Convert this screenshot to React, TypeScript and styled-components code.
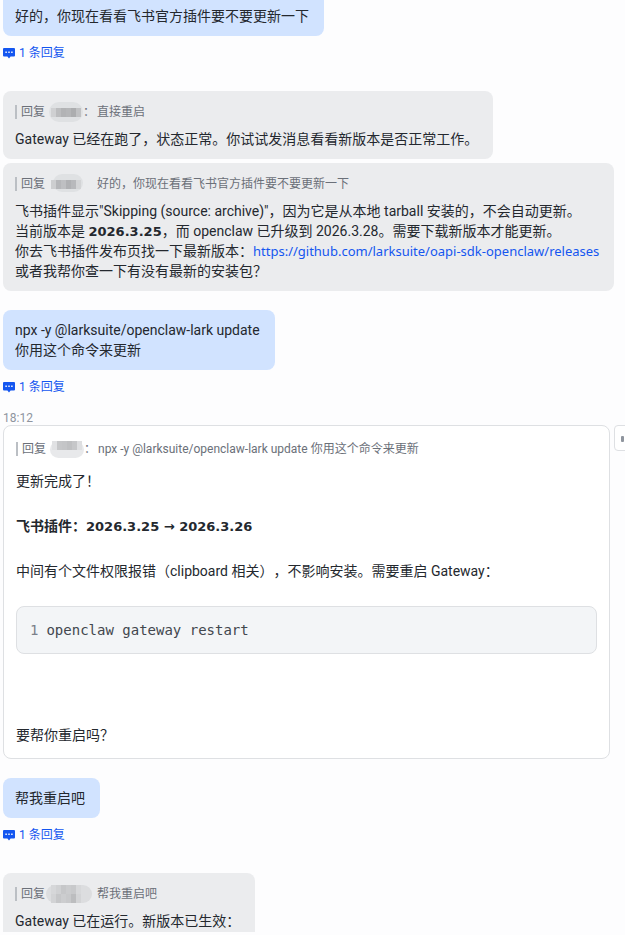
import React from "react";
import styled, { createGlobalStyle, css } from "styled-components";

const GlobalStyle = createGlobalStyle`
  * { box-sizing: border-box; }
  body {
    margin: 0;
    background: #fdfdfe;
    color: #24282e;
    font-family: Roboto, "Noto Sans CJK SC", sans-serif;
    font-size: 14px;
    line-height: 20px;
    text-spacing-trim: space-all;
  }
`;

const Page = styled.main`
  display: flex;
  flex-direction: column;
  padding: 0 0 3px 3px;
  overflow: hidden;
`;

const Thread = styled.section<{ $space?: number }>`
  display: flex;
  flex-direction: column;
  align-items: flex-start;
  margin-top: ${(p) => p.$space ?? 0}px;
`;

type Tone = "mine" | "theirs";

const Bubble = styled.div<{ $tone: Tone; $cut?: "top" | "bottom" }>`
  padding: 10px 15px 10px 12px;
  max-width: 100%;
  border-radius: 8px;
  background: ${(p) => (p.$tone === "mine" ? "#d1e3ff" : "#ebecee")};
  ${(p) =>
    p.$cut === "top" &&
    css`
      padding-top: 6px;
      border-radius: 0 0 8px 8px;
    `}
  ${(p) =>
    p.$cut === "bottom" &&
    css`
      padding-bottom: 1px;
      border-radius: 8px 8px 0 0;
    `}
`;

const Stack = styled.div`
  display: flex;
  flex-direction: column;
  align-items: flex-start;
  gap: 4px;
`;

const Text = styled.p`
  margin: 0;
`;

const Version = styled.b`
  font-family: "DejaVu Sans", sans-serif;
  font-size: 13px;
  line-height: 16px;
`;

const Link = styled.a`
  color: #1456f0;
  font-family: "Noto Sans", sans-serif;
  font-size: 13px;
  line-height: 16px;
  text-decoration: none;
`;

const RepliesButton = styled.button`
  display: flex;
  align-items: center;
  gap: 4px;
  margin-top: 7px;
  padding: 0;
  border: 0;
  background: none;
  color: #1456f0;
  font: inherit;
  font-size: 12px;
  line-height: 20px;
  cursor: pointer;
`;

const QuoteLine = styled.div<{ $gap?: number }>`
  display: flex;
  align-items: center;
  height: 22px;
  margin-bottom: ${(p) => p.$gap ?? 6}px;
  color: #6b7079;
  font-size: 12px;
  white-space: nowrap;
`;

const QuoteBar = styled.span`
  width: 2px;
  height: 14px;
  margin-right: 4px;
  background: #bbbfc4;
`;

const QuoteSender = styled.span`
  display: flex;
  align-items: center;
  width: 76px;
`;

const Time = styled.time`
  margin-top: 14px;
  color: #8f959e;
  font-size: 12px;
  line-height: 14px;
`;

const CardRow = styled.div`
  display: flex;
  align-items: flex-start;
  align-self: stretch;
  gap: 4px;
`;

const Card = styled.article`
  flex: 1;
  min-width: 0;
  padding: 12px 12px 13px;
  border: 1px solid #dee0e3;
  border-radius: 8px;
  background: #fff;
`;

const CardBody = styled.div`
  display: flex;
  flex-direction: column;
  gap: 25px;
`;

const CodeBlock = styled.pre`
  display: flex;
  gap: 8px;
  margin: 0 0 46px;
  padding: 13px;
  border: 1px solid #dee0e3;
  border-radius: 8px;
  background: #f3f5f7;
  color: #42474e;
  font-family: "DejaVu Sans Mono", monospace;
  font-size: 14px;
  line-height: 20px;

  code {
    font: inherit;
  }
`;

const LineNumber = styled.span`
  color: #7a8089;
`;

const SideButton = styled.button`
  flex: none;
  display: flex;
  align-items: center;
  width: 28px;
  height: 26px;
  margin-right: -17px;
  padding: 0 6px;
  border: 1px solid #dee0e3;
  border-radius: 4px;
  background: #fff;
  color: #8f959e;
`;

const Chat = () => (
  <svg width="12" height="12" viewBox="0 0 12 12" aria-hidden="true">
    <path
      d="M1 1h10a1 1 0 0 1 1 1v6.6a1 1 0 0 1-1 1H7.6L6 11.4 4.4 9.6H1a1 1 0 0 1-1-1V2a1 1 0 0 1 1-1z"
      fill="#1456f0"
    />
    <path d="M2.4 4.6h1.4v1.4H2.4zM5.3 4.6h1.4v1.4H5.3zM8.2 4.6h1.4v1.4H8.2z" fill="#fff" />
  </svg>
);

type MaskKind = "first" | "second" | "card" | "last";

const masks: Record<
  MaskKind,
  { haze: string; x: number; y: number; w: number; h: number; top: number; rows: string[][] }
> = {
  first: {
    haze: "#dfe1e3", x: 4, y: 0, w: 34, h: 20, top: 6,
    rows: [["#cfd0d2", "#bcbdbf", "#b2b3b5", "#b5b6b8", "#acadaf", "#c0c1c3"]],
  },
  second: {
    haze: "#dfe1e3", x: 8, y: 0, w: 30, h: 18, top: 6,
    rows: [["#cdced0", "#b6b7ba", "#bebfc2", "#b0b1b4", "#b8b9bc", "#d3d4d6"]],
  },
  card: {
    haze: "#e8e9eb", x: 4, y: 2, w: 34, h: 17, top: 2,
    rows: [["#e0e1e3", "#c6c7c9", "#c4c5c7", "#bfc0c2", "#c6c7c9", "#dedfe1"]],
  },
  last: {
    haze: "#dcdddf", x: 1, y: 1, w: 46, h: 18, top: 1,
    rows: [
      ["#d6d7d9", "#d0d1d3", "#c6c7c9", "#cbccce", "#c8c9cb", "#d7d8da"],
      ["#d2d3d5", "#c6c7c9", "#cccdcf", "#c8c9cb", "#bcbdbf", "#d3d4d6"],
    ],
  },
};

const Mosaic = ({ kind }: { kind: MaskKind }) => {
  const m = masks[kind];
  return (
    <svg width="38" height="20" viewBox="0 0 38 20" overflow="visible" aria-hidden="true">
      <rect x={m.x} y={m.y} width={m.w} height={m.h} rx={m.h / 2} fill={m.haze} />
      {m.rows.map((row, r) =>
        row.map((fill, i) => (
          <rect key={`${r}-${i}`} x={6 + i * 5} y={m.top + r * 9} width="5" height="9" fill={fill} />
        )),
      )}
    </svg>
  );
};

const Quote = ({
  children,
  mask,
  colon = false,
  gap,
}: {
  children: React.ReactNode;
  mask: MaskKind;
  colon?: boolean;
  gap?: number;
}) => (
  <QuoteLine $gap={gap}>
    <QuoteBar />
    <QuoteSender>
      回复
      <Mosaic kind={mask} />
      {colon && "："}
    </QuoteSender>
    {children}
  </QuoteLine>
);

const Replies = () => (
  <RepliesButton type="button">
    <Chat />1 条回复
  </RepliesButton>
);

export default function App() {
  return (
    <>
      <GlobalStyle />
      <Page>
        <Thread>
          <Bubble $tone="mine" $cut="top">
            <Text>好的，你现在看看飞书官方插件要不要更新一下</Text>
          </Bubble>
          <Replies />
        </Thread>

        <Thread $space={28}>
          <Stack>
            <Bubble $tone="theirs">
              <Quote mask="first" colon>
                直接重启
              </Quote>
              <Text>Gateway 已经在跑了，状态正常。你试试发消息看看新版本是否正常工作。</Text>
            </Bubble>
            <Bubble $tone="theirs">
              <Quote mask="second">好的，你现在看看飞书官方插件要不要更新一下</Quote>
              <Text>飞书插件显示"Skipping (source: archive)"，因为它是从本地 tarball 安装的，不会自动更新。</Text>
              <Text>
                当前版本是 <Version>2026.3.25</Version>，而 openclaw 已升级到 2026.3.28。需要下载新版本才能更新。
              </Text>
              <Text>
                你去飞书插件发布页找一下最新版本：
                <Link href="https://github.com/larksuite/oapi-sdk-openclaw/releases">
                  https://github.com/larksuite/oapi-sdk-openclaw/releases
                </Link>
              </Text>
              <Text>或者我帮你查一下有没有最新的安装包？</Text>
            </Bubble>
          </Stack>
        </Thread>

        <Thread $space={19}>
          <Bubble $tone="mine">
            <Text>npx -y @larksuite/openclaw-lark update</Text>
            <Text>你用这个命令来更新</Text>
          </Bubble>
          <Replies />
        </Thread>

        <Thread>
          <Time>18:12</Time>
          <CardRow>
            <Card>
              <Quote mask="card" colon gap={11}>
                npx -y @larksuite/openclaw-lark update 你用这个命令来更新
              </Quote>
              <CardBody>
                <Text>更新完成了！</Text>
                <Text>
                  <b>飞书插件：</b>
                  <Version>2026.3.25 → 2026.3.26</Version>
                </Text>
                <Text>中间有个文件权限报错（clipboard 相关），不影响安装。需要重启 Gateway：</Text>
                <CodeBlock>
                  <LineNumber>1</LineNumber>
                  <code>openclaw gateway restart</code>
                </CodeBlock>
                <Text>要帮你重启吗？</Text>
              </CardBody>
            </Card>
            <SideButton type="button" aria-label="点赞">
              <svg width="14" height="14" viewBox="0 0 14 14" aria-hidden="true">
                <rect x="0" y="5" width="3" height="6" rx="1" fill="currentColor" />
                <path d="M4 5h1l2-3.5c1.5 0 2 1 1.5 3.5H13l-1.5 6H4z" fill="currentColor" />
              </svg>
            </SideButton>
          </CardRow>
        </Thread>

        <Thread $space={19}>
          <Bubble $tone="mine">
            <Text>帮我重启吧</Text>
          </Bubble>
          <Replies />
        </Thread>

        <Thread $space={28}>
          <Bubble $tone="theirs" $cut="bottom">
            <Quote mask="last">帮我重启吧</Quote>
            <Text>Gateway 已在运行。新版本已生效：</Text>
          </Bubble>
        </Thread>
      </Page>
    </>
  );
}
